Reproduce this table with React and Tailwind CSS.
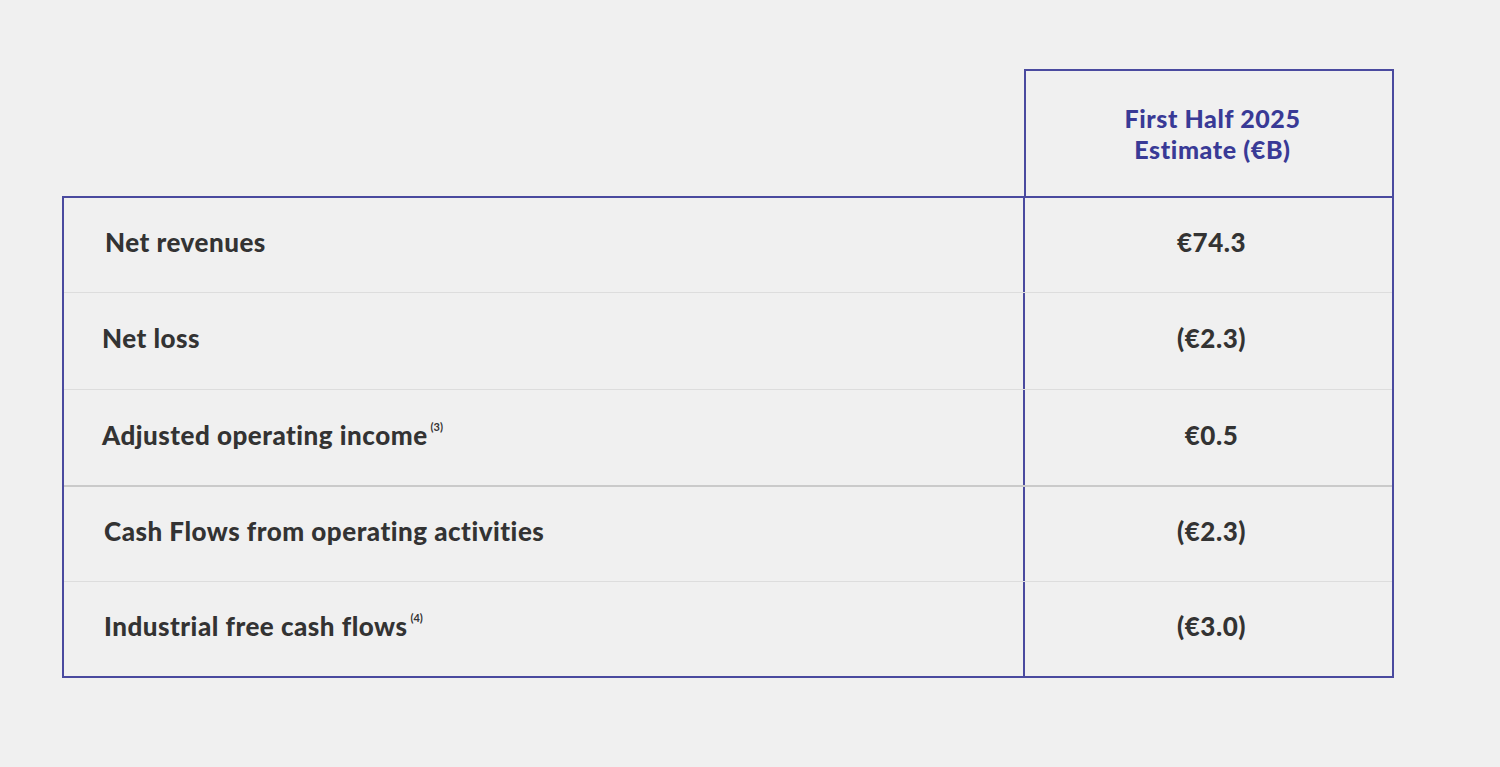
import React from 'react';

const rows = [
    { label: 'Net revenues', value: '€74.3', pad: 'pl-[41px]', h: 'h-[95px]' },
    { label: 'Net loss', value: '(€2.3)', pad: 'pl-[38px]', h: 'h-[97px]' },
    { label: 'Adjusted operating income', note: '(3)', value: '€0.5', pad: 'pl-[38px]', h: 'h-[97px]', strong: true },
    { label: 'Cash Flows from operating activities', value: '(€2.3)', pad: 'pl-[40px]', h: 'h-[95px]' },
    { label: 'Industrial free cash flows', note: '(4)', value: '(€3.0)', pad: 'pl-[40px]', h: 'h-[94px]' },
];

function App() {
    return (
        <div className="min-h-screen bg-[#f0f0f0] pt-[69px] pl-[62px] font-['Lato',sans-serif]">
            <div className="w-[1332px]">
                <div className="flex justify-end">
                    <div className="w-[370px] h-[127px] border-2 border-b-0 border-[#4a4a9f] flex flex-col items-center justify-center pl-[7px] text-[#393a96] font-black text-[25px] leading-[31px] tracking-[0.6px]">
                        <span>First Half 2025</span>
                        <span>Estimate (€B)</span>
                    </div>
                </div>

                <div className="border-2 border-[#4a4a9f]">
                    {rows.map((row, i) => (
                        <div
                            key={row.label}
                            className={
                                'grid grid-cols-[961px_1fr] ' + row.h + ' ' +
                                (i === rows.length - 1 ? '' : row.strong ? 'border-b-2 border-[#cacaca]' : 'border-b border-[#dddddd]')
                            }
                        >
                            <div className={'flex items-center pb-[5px] border-r-2 border-[#4a4a9f] text-[#333333] font-black text-[26px] tracking-[0.5px] ' + row.pad}>
                                <span>{row.label}</span>
                                {row.note && <sup className="ml-[3px] text-[11px] font-bold tracking-normal -translate-y-[3px]">{row.note}</sup>}
                            </div>
                            <div className="flex items-center justify-center pb-[5px] text-[#333333] font-black text-[26px] tracking-[0.5px] pl-[6px]">
                                {row.value}
                            </div>
                        </div>
                    ))}
                </div>
            </div>
        </div>
    );
}

export default App;
